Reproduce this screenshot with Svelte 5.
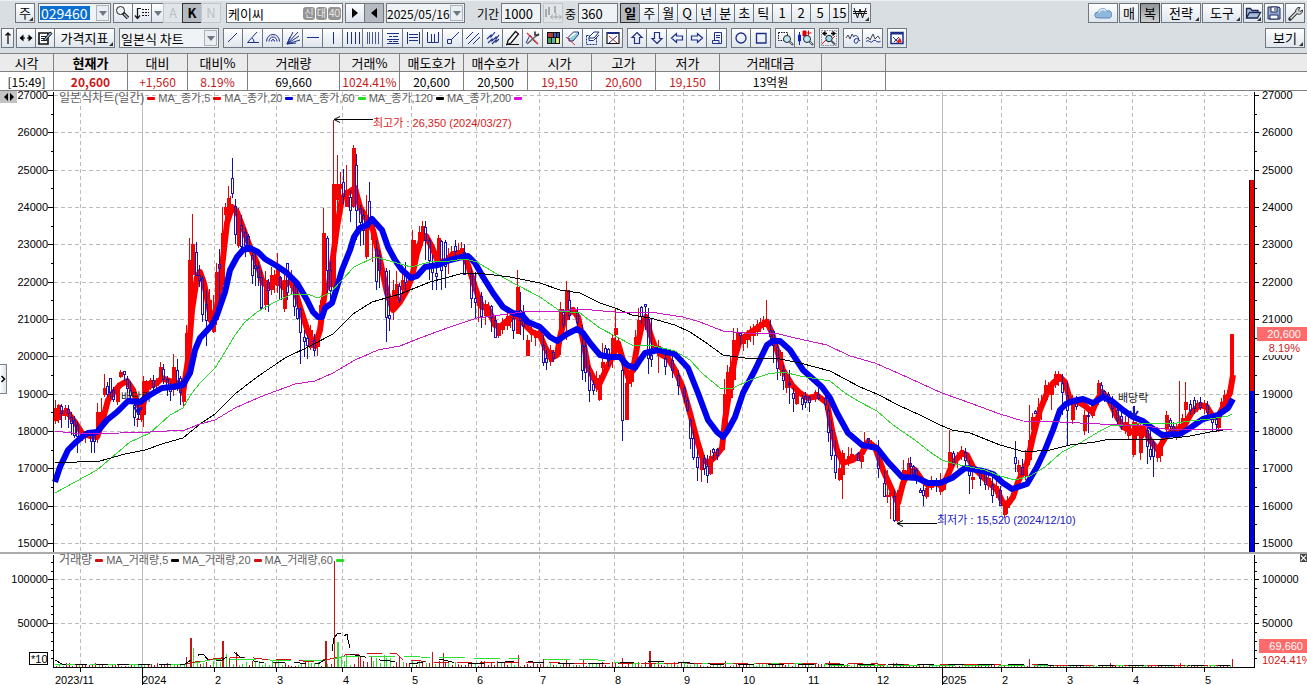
<script>
  // Icons are drawn on an 18 x 18 grid inside each toolbar button.
  const navy = '#1c2f86';
  const ln = (d, c = navy, w = 1) => `<path d="${d}" fill="none" stroke="${c}" stroke-width="${w}"/>`;
  const lens = '<circle cx="11" cy="10" r="3.5" fill="#bfe9ee" stroke="#223" /><path d="M13.5 12.5L17 16" stroke="#55606a" stroke-width="2.4"/><path d="M14 13L16 15" stroke="#b9c3c9"/>';
  const icons = {
    search: '<circle cx="6.5" cy="6.500" r="4" fill="#eef4f8" stroke="#222"/><path d="M9 9L14 14" stroke="#222" stroke-width="3.6"/><path d="M10 10L14 14" stroke="#aab4ba" stroke-width="1.6"/>',
    sort: ln('M4.500 14V4.500H8M2 11.500L4.500 14.500L7 11.500', '#111', 1.2) + '<path d="M9 5.500h7M9 8.500h7M9 11.500h7" stroke="#111" stroke-dasharray="2 1"/>',
    spread: '<path d="M2 5v8M5 3v8M11 2v7" stroke="#aaa" stroke-width="2"/><path d="M7 13h10M9 10.500L6.500 13L9 15.500M15 10.500L17.500 13L15 15.500M12 9v6" stroke="#a3a3a3" fill="none"/>',
    won: ln('M2 4L5.500 14L8 5L10.500 14L14 4M1 7.500h14M1 9.500h14', '#111'),
    cloud: '<path d="M4.500 14a3.500 3 0 0 1-.5-6a5 5 0 0 1 9-1a3.800 3.600 0 0 1 2 7z" fill="#8fb8dc" stroke="#5c88b4"/><path d="M5 8.500a4 4 0 0 1 7-1.500" stroke="#e4f1fb" fill="none" stroke-width="1.500"/>',
    folder: '<path d="M2.500 14V4.500h4l1.500 2h6V9M2.500 14l3-5.500h11l-3 5.500z" fill="#a9bddb" stroke="#1b2a55" stroke-width="1.300"/>',
    disk: '<path d="M3 3h11l1 1v11H3z" fill="#93a9d4" stroke="#1b2a55"/><path d="M6 3h6v5H6zM5 11h8v4H5z" fill="#fff" stroke="#1b2a55"/><path d="M10 4v3" stroke="#1b2a55"/>',
    wrench: '<path d="M4 15L11 8" stroke="#333" stroke-width="3.600" stroke-linecap="round"/><path d="M10 8.500a3.600 3.600 0 0 1 4-5l-1.500 2.500l1.500 1.500l2.500-1.500a3.600 3.600 0 0 1-5 4z" fill="#cfd4d8" stroke="#333"/><path d="M4.500 14.500L11 8" stroke="#d8dde0" stroke-width="1.600"/>',
    up: ln('M9 15V4M6.500 6.500L9 4L11.500 6.500', '#111', 1.3),
    leftright: '<path d="M2.500 9L6.500 5.500v7zM15.500 9L11.500 5.500v7z" fill="#000"/><path d="M5 9h8" stroke="#000" stroke-dasharray="3 2"/>',
    memo: '<path d="M3 4h9v11H3z" fill="#fff" stroke="#111" stroke-width="1.600"/><path d="M5 7.500h5M5 9.500h6M5 11.500h6" stroke="#223"/><path d="M7.500 11L14 3l2 1.500L9 12z" fill="#8fa9c9" stroke="#111"/>',
    line: ln('M4 13L13 4'),
    angle: ln('M13 3L3.500 13.500H15M8 9a5 5 0 0 1 2 4.500'),
    arcs: ln('M2.500 12.500a6.500 7 0 0 1 13 0M5 12.500a4 4.500 0 0 1 8 0M7.500 12.500a1.500 2 0 0 1 3 0'),
    fan: ln('M3 15L14 3M3 15L9 3M3 15L15 7M3 15L16 11M3 15L12 14M3 15L6 8'),
    h: ln('M3 8.500h12'),
    v: ln('M9.500 3v12'),
    v4: ln('M3.500 3v12M7.500 3v12M11.500 3v12M15.500 3v12'),
    v5: ln('M3.500 3v12M5.500 3v12M8.500 3v12M11.500 3v12M14.500 3v12', '#4a5a94'),
    rows: ln('M3 4.500h12M5 7.500h3M9 7.500h5M3 10.500h12M5 12.500h3M9 12.500h5M3 14.500h12'),
    rowsbox: ln('M3.500 3v12M15.500 3v12M5 5.500h9M5 8.500h9M5 11.500h9'),
    cycles: ln('M3.500 3v10.500h4V5M7.500 13.500h3V5M10.500 13.500h4V3'),
    node: ln('M7 11L15 3M3.500 10.500h4v4h-4z'),
    hatch: ln('M2 10L9 3M4 15L15 4M9 15L16 8'),
    hatch2: ln('M3 10l4-4v2l4-5M4 14l4-4v2l4-4v2l3-4M8 15l4-4v2l3-3', navy, 1.1),
    pencil: '<path d="M4 11.500L11.500 2.500l3 2.500L7 14l-4 1.500z" fill="#fff" stroke="#111" stroke-width="1.300"/><path d="M2 15.500h13" stroke="#111"/>',
    crosswrench: ln('M2 14l4-8 4 6 4 3', '#1c2f86') + ln('M3 4l11 11', '#d33', 1.2) + ln('M3 15L12 7', '#666', 1.6) + ln('M11 2.500v3.500h4M12 7l3-2', '#333', 1.6),
    palette: '<path d="M3 3h13v12H3z" fill="#111"/><path d="M4 4h5v4H4z" fill="#b43a3a"/><path d="M10 4h2v4h-2z" fill="#3b62bd"/><path d="M13 4h2v4h-2z" fill="#3c4fae"/><path d="M4 9h3v5H4z" fill="#48a05a"/><path d="M8 9h3v5H8z" fill="#52b8b0"/><path d="M12 9h3v5h-3z" fill="#e9e368"/>',
    eraser: '<path d="M4 8.500L9.500 3h5L9 9.500H4z" fill="#fff" stroke="#1c2f86"/><path d="M5 9.500v2.500h4l5.500-6.500V3" fill="#8fd0d6" stroke="#1c2f86"/><path d="M2 8l9 8" stroke="#d33"/>',
    eraserbox: '<path d="M2.500 6.500h10v9h-10z" fill="none" stroke="#1c2f86" stroke-dasharray="2 1"/><path d="M5 8L10 3h5L10 9H5zM5 9v2.500h4.500L15 6" fill="#fff" stroke="#1c2f86"/>',
    closebox: '<path d="M3 3.500h12v11H3z" fill="#fff" stroke="#111" stroke-width="1.200"/><path d="M3 4h12" stroke="#1c2f86" stroke-width="2"/><path d="M5 7l8 7" stroke="#d22"/><path d="M13 7l-8 7" stroke="#1c2f86"/>',
    aup: ln('M9 3.500L14 8.500H11.500V14.500H6.500V8.500H4z', navy, 1.2),
    adown: ln('M9 14.500L14 9.500H11.500V3.500H6.500V9.500H4z', navy, 1.2),
    aleft: ln('M3.500 9L8.500 4.500V7H14.500V11H8.500V13.500z', navy, 1.2),
    aright: ln('M14.500 9L9.500 4.500V7H3.500V11H9.500V13.500z', navy, 1.2),
    scroll: ln('M6.500 3.500h7v11h-9v-3h3.500M6.500 3.500v8M11 14.500v-3H5M8 6.500h4M8 8.500h4'),
    circle: ln('M14 9a5 5 0 1 1-10 0a5 5 0 1 1 10 0', navy, 1.3),
    square: ln('M4.500 4.500h9.500v9.500H4.500z', navy, 1.3),
    zoombox: '<path d="M2.500 3.500h9v8h-9z" fill="none" stroke="#111" stroke-dasharray="1.500 1"/>' + lens,
    zoomcandle: '<path d="M3.500 3v13M2.500 6h2v6h-2z" stroke="#1020c8" fill="#1020c8"/><path d="M7 2h3v5H7zM12.500 1.500v5M10.500 4h5" stroke="#d00" fill="#d00"/>' + lens,
    zoomrange: '<path d="M1.500 1.500h15v15h-15z" fill="none" stroke="#888" stroke-dasharray="1.500 1"/><path d="M3 4.500h4M11 4.500h4M5.500 2.500L3 4.500l2.500 2M12.500 2.500L15 4.500l-2.500 2" stroke="#000" fill="none" stroke-width="1.300"/><path d="M2 15l4-4 3 2 6-6" stroke="#d22" fill="none"/><circle cx="9" cy="9.500" r="3.200" fill="#9adfe4" stroke="#223"/><path d="M11.500 12L15 15.500" stroke="#556" stroke-width="2"/>',
    wave: ln('M2 9l2-3 2 4 2-5 2 3', '#445') + ln('M9 8c3-4 8 1 4 6c-2 1-4-1-2-4c2-1 4 0 5 2'),
    wave2: ln('M2 10l2-2 2 3 3-6 2 5 3-3 2 3', '#445') + ln('M2 12.500q2-2 3.500 0q2 2 4-1q2-1 3 1q2 1 4 0'),
    report: '<path d="M3 3.500h12v11H3z" fill="#fff" stroke="#1c2f86" stroke-width="1.500"/><path d="M3 4.500h12" stroke="#1c2f86" stroke-width="2"/><path d="M5 8l6 6M6 13l5-5" stroke="#1c2f86"/><path d="M8 13.500l4-5 2 5z" fill="#d22"/>'
  };

  const drawTools = [
    ['line', '추세선'], ['angle', '각도선'], ['arcs', '피보나치 아크'], ['fan', '피보나치 팬'], ['h', '수평선'],
    ['v', '수직선'], ['v4', '등간격선'], ['v5', '시간대'], ['rows', '되돌림'], ['rowsbox', '분할선'],
    ['cycles', '사이클'], ['node', '선분'], ['hatch', '평행선'], ['hatch2', '채널'], ['pencil', '연필'],
    ['crosswrench', '설정'], ['palette', '색상'], ['eraser', '지우개'], ['eraserbox', '영역 지우기'], ['closebox', '모두 지우기']
  ];
  const toolGroups = [
    drawTools,
    [['aup', '위'], ['adown', '아래'], ['aleft', '왼쪽'], ['aright', '오른쪽'], ['scroll', '메모']],
    [['circle', '원'], ['square', '사각형']],
    [['zoombox', '영역 확대'], ['zoomcandle', '봉 확대']],
    [['zoomrange', '구간 확대']],
    [['wave', '파동'], ['wave2', '패턴']],
    [['report', '보고서']]
  ];
  const periods = ['일', '주', '월', 'Q', '년', '분', '초', '틱', '1', '2', '5', '15'];
  let period = $state('일');

  const quote = [
    ['시각', '[15:49]', 54, ''], ['현재가', '20,600', 74, 'red bold'], ['대비', '+1,560', 60, 'red'],
    ['대비%', '8.19%', 60, 'red'], ['거래량', '69,660', 92, ''], ['거래%', '1024.41%', 60, 'red'],
    ['매도호가', '20,600', 64, ''], ['매수호가', '20,500', 64, ''], ['시가', '19,150', 64, 'red'],
    ['고가', '20,600', 64, 'red'], ['저가', '19,150', 64, 'red'], ['거래대금', '13억원', 102, ''], ['', '', 64, '']
  ];

  const priceLegend = [['MA_종가,5', '#f00000'], ['MA_종가,20', '#f00000'], ['MA_종가,60', '#0000e0'], ['MA_종가,120', '#20e020'], ['MA_종가,200', '#000']];
  const lastLegend = '#e000e0';
  const volumeLegend = [['MA_거래량,5', '#d01010'], ['MA_거래량,20', '#000'], ['MA_거래량,60', '#d01010']];

  const prices = [27000, 26000, 25000, 24000, 23000, 22000, 21000, 20000, 19000, 18000, 17000, 16000, 15000];
  const py = (p) => Math.round(95 + ((27000 - p) * 448) / 12000);
  const months = [
    [80, '2023/11', 55], [142, '2024', 142, 1], [214, '2', 215], [276, '3', 277], [342, '4', 343], [411, '5', 412],
    [476, '6', 477], [539, '7', 540], [614, '8', 615], [683, '9', 684], [742, '10', 743], [807, '11', 808],
    [876, '12', 877], [942, '2025', 942, 1], [1001, '2', 1002], [1066, '3', 1067], [1132, '4', 1133], [1204, '5', 1205]
  ];
  const minorVolume = [562, 571, 588, 597, 606, 614, 632, 641, 650, 658];

  const ma5 = '55,420 60,413 68,413 75,422 82,433 90,436 97,437 102,423 108,400 113,393 120,385 127,381 133,390 138,405 142,410 147,387 157,383 162,378 167,380 173,382 180,384 183,393 188,360 192,310 197,277 200,272 204,283 208,303 212,323 217,307 222,267 227,223 232,207 237,212 242,225 250,247 257,263 263,283 270,287 277,277 283,287 292,280 300,307 308,332 315,346 320,330 325,290 329,284 333,257 337,227 342,198 348,193 355,188 360,207 367,220 373,230 380,260 387,293 393,310 400,302 407,290 412,277 417,253 422,237 426,236 432,247 438,262 447,261 453,254 462,253 468,265 475,287 482,307 488,308 495,325 500,327 508,320 515,315 523,323 532,332 540,335 545,347 551,358 557,355 560,337 565,317 573,310 578,317 583,340 588,367 598,387 605,372 613,355 618,343 623,360 628,377 633,370 637,347 642,325 646,317 650,333 655,347 662,355 668,358 675,370 683,388 690,413 697,440 703,460 708,463 715,457 722,448 725,420 730,387 735,357 740,340 747,335 757,328 767,322 772,333 777,350 783,370 792,385 800,393 808,398 818,396 827,403 832,430 837,450 843,463 853,460 862,453 868,442 875,447 883,470 892,490 898,503 903,483 908,473 915,470 922,480 928,485 937,483 942,487 947,477 953,463 962,453 967,455 973,467 983,477 997,490 1003,503 1008,504 1013,497 1018,482 1027,463 1033,437 1040,410 1047,393 1053,383 1060,377 1065,382 1070,400 1078,402 1085,406 1092,412 1097,400 1102,392 1108,398 1117,417 1123,427 1132,432 1143,428 1150,440 1158,450 1165,438 1173,430 1183,428 1192,412 1200,405 1207,407 1213,417 1218,417 1225,403 1230,393 1233,375';
  const ma20 = '55,482 60,467 68,450 75,443 82,437 88,433 97,432 107,420 117,412 128,401 140,402 150,395 162,388 172,387 183,385 190,373 195,350 200,338 212,325 217,315 225,292 230,270 237,257 243,250 250,248 258,252 265,259 277,266 287,273 297,283 307,300 313,312 318,317 322,317 325,308 332,303 337,287 342,270 350,250 354,237 360,228 367,225 372,219 382,230 388,247 395,260 402,270 411,278 417,276 425,267 438,265 450,260 462,257 468,256 475,263 483,277 493,293 503,307 513,313 522,315 528,322 540,327 550,337 557,341 567,334 577,329 583,333 590,343 600,355 610,357 620,357 627,365 635,368 640,360 645,353 658,350 675,354 688,368 698,393 708,420 717,432 723,437 728,430 735,417 743,393 755,370 767,345 773,341 780,341 790,350 803,370 822,387 830,398 837,413 848,433 862,445 877,448 888,462 902,477 917,478 928,483 940,483 952,478 965,468 983,471 993,474 1003,483 1012,489 1027,484 1037,467 1045,450 1053,430 1060,410 1066,404 1073,401 1083,399 1093,403 1103,397 1112,401 1123,410 1133,417 1143,421 1152,428 1162,435 1180,434 1190,428 1203,419 1218,415 1228,408 1233,399';
  const ma60 = '55,493 75,482 97,470 110,459 130,442 150,433 170,415 183,408 192,393 200,383 215,368 225,352 235,335 245,322 257,312 275,302 292,294 310,295 318,298 330,293 342,280 354,267 375,257 390,261 411,267 430,262 450,261 465,259 477,262 490,270 515,284 540,297 560,311 580,313 600,328 615,336 632,345 650,345 675,351 690,360 703,374 720,388 733,388 750,380 768,374 783,372 800,376 830,381 845,393 858,401 877,411 893,425 915,440 930,452 942,460 955,464 985,470 1000,476 1015,480 1030,476 1045,467 1062,452 1080,443 1100,431 1112,425 1130,425 1145,423 1170,424 1190,421 1210,419 1228,416 1232,414';
  const ma120 = '55,463 100,461 125,454 145,450 165,443 183,438 200,424 215,414 235,394 257,377 285,358 310,346 333,334 353,314 372,302 400,294 430,282 460,274 477,273 510,277 540,283 560,290 580,293 600,303 615,308 632,315 650,318 675,325 690,332 705,342 723,355 745,358 775,358 800,363 830,371 860,387 877,394 900,406 920,415 940,425 952,430 970,433 1000,445 1025,452 1050,450 1070,445 1095,442 1110,439 1130,439 1165,439 1190,436 1210,432 1230,429';
  const ma200 = '55,431 80,434 120,433 150,432 185,430 200,424 215,420 235,408 260,397 295,384 315,381 333,373 355,360 378,350 400,346 420,338 450,327 477,318 500,315 530,311 560,311 580,309 615,312 650,312 683,317 700,322 723,331 745,333 775,333 795,338 827,345 850,356 875,363 900,374 942,393 970,403 1000,414 1023,421 1060,422 1100,424 1145,426 1165,429 1232,429';

  // Each candle: direction, x, high, low, body top, body bottom.
  const candles = `R 55 400 424 408 421;R 58 404 423 405 420;B 61 404 428 406 413;R 65 405 420 408 416;B 68 405 428 409 413;B 71 412 435 417 423;B 74 416 438 420 435;B 77 422 453 425 436;R 82 430 441 431 437;R 85 432 443 433 437;B 91 431 453 435 441;B 94 431 453 435 441;R 97 403 443 412 438;R 101 398 425 412 424;R 104 374 397 388 395;B 107 382 397 386 394;B 110 378 399 378 392;B 113 387 402 390 399;R 117 383 405 390 402;R 120 370 378 372 377;B 124 371 381 371 374;B 127 376 393 379 388;B 130 381 400 390 395;B 134 400 426 405 417;B 138 404 420 408 414;R 137 418 427 419 420;R 141 404 422 407 420;R 143 376 427 381 415;R 146 380 392 381 388;R 150 378 390 380 387;B 153 375 390 380 387;R 156 378 388 380 386;R 160 362 383 367 380;B 163 364 384 369 379;B 167 376 396 379 386;B 170 383 401 387 391;R 173 354 396 367 390;B 177 359 391 370 385;B 180 376 405 378 392;R 183 375 408 380 402;R 186 325 385 333 380;R 189 238 350 260 345;R 192 214 295 244 275;B 196 242 276 252 275;B 199 265 287 275 280;B 202 276 322 278 314;B 206 290 346 304 320;R 209 289 325 300 322;R 213 295 333 312 332;R 216 263 325 272 320;B 219 249 300 264 268;R 222 207 290 233 285;R 225 203 260 207 215;R 228 186 225 198 215;R 230 196 220 204 214;B 232 158 198 178 193;B 235 199 244 206 234;R 238 208 248 215 246;B 241 215 250 225 246;B 245 228 257 232 245;B 248 234 252 236 248;B 252 250 284 255 275;B 255 252 286 265 268;B 258 262 286 267 277;B 261 270 307 277 308;R 265 271 310 280 305;B 268 279 312 282 290;R 271 267 295 275 290;R 274 270 293 275 285;R 277 253 293 268 286;B 280 276 300 277 299;R 284 275 312 280 309;B 287 263 300 263 292;R 291 270 295 276 288;B 294 280 316 285 306;B 297 290 320 308 318;B 300 307 364 309 332;B 304 330 357 337 341;B 307 335 359 338 345;R 310 325 350 330 348;B 314 334 356 340 350;R 317 330 356 335 347;R 320 300 335 305 330;R 323 208 320 233 300;B 327 236 295 238 270;B 330 261 308 270 290;R 333 120 292 184 287;R 337 155 230 184 200;R 340 172 205 184 189;B 343 169 204 182 196;R 346 165 207 190 207;B 350 190 222 197 210;R 353 145 208 148 207;B 356 154 240 165 210;B 360 205 246 208 222;B 363 210 245 215 230;R 366 195 259 215 257;B 369 182 228 201 217;R 372 220 262 225 240;B 376 240 290 249 281;B 379 250 288 255 270;B 386 268 342 271 317;B 389 270 331 315 318;R 393 280 320 290 305;R 396 271 305 284 300;B 399 283 303 286 300;R 402 272 300 280 290;B 405 262 290 272 282;R 412 230 275 240 275;R 415 240 268 244 262;R 419 226 252 232 248;R 422 221 246 226 240;B 425 221 260 227 240;B 429 238 280 240 260;B 432 255 290 264 272;B 436 268 290 273 276;R 438 235 263 238 262;B 441 240 290 241 270;B 445 240 288 242 266;R 448 248 274 255 262;R 451 246 262 252 258;B 455 240 258 246 251;R 458 243 260 250 256;R 461 242 258 248 255;B 464 244 275 252 274;B 471 268 308 274 298;B 475 272 318 298 302;R 478 290 322 296 306;B 481 292 328 296 316;R 485 300 325 304 316;R 488 302 318 306 314;B 491 305 332 306 317;B 495 315 338 320 337;R 498 323 338 325 336;R 502 318 334 322 330;R 507 313 330 316 326;R 510 312 328 318 322;B 513 315 339 318 330;R 517 270 334 287 334;B 520 292 335 310 320;B 523 305 340 312 326;R 527 335 356 340 356;R 531 326 342 330 335;R 535 330 346 332 338;R 539 324 340 330 336;B 543 335 366 345 362;B 546 350 370 358 362;R 550 345 366 350 362;B 553 350 362 352 358;R 557 340 356 345 352;R 560 302 355 309 330;B 563 309 328 312 324;R 566 281 340 290 320;B 569 290 320 300 315;B 577 307 332 312 322;B 582 325 380 345 370;B 585 340 382 346 372;B 589 365 402 373 390;B 593 380 395 384 390;R 596 371 392 378 388;R 599 375 401 380 400;R 602 343 371 362 368;B 605 345 357 348 355;B 608 348 367 349 360;R 612 335 368 338 360;R 615 308 352 328 335;R 618 338 356 342 352;B 622 360 441 370 420;R 626 378 420 383 420;R 628 372 388 376 384;R 631 370 387 372 382;R 635 330 372 337 365;R 638 308 340 320 335;B 641 306 324 307 316;B 645 304 330 304 306;B 648 308 374 319 358;B 651 318 367 355 359;R 658 340 373 346 356;B 665 355 375 358 366;B 672 355 378 360 370;B 678 370 395 375 385;B 684 385 403 388 396;B 687 397 412 400 410;B 690 418 449 420 438;B 693 430 460 438 457;B 697 450 481 457 467;R 701 455 482 460 470;B 704 455 475 458 468;B 707 455 483 466 475;R 710 450 475 456 474;B 713 448 460 449 452;B 717 448 460 449 455;R 724 379 450 394 430;R 727 365 430 372 400;R 730 357 400 367 398;R 733 328 390 340 380;R 737 328 360 333 345;B 740 332 345 333 335;R 743 335 351 338 344;R 747 330 348 334 340;R 750 326 342 330 336;R 753 324 345 328 336;R 757 320 336 324 332;R 760 318 332 322 328;R 763 316 330 320 326;R 766 300 325 319 324;B 770 320 340 330 336;B 773 330 363 331 345;B 777 338 380 347 368;R 780 350 376 352 370;B 783 365 390 370 380;R 786 374 393 378 388;B 789 370 404 383 384;B 793 388 412 393 398;R 796 390 405 392 404;B 802 395 410 398 404;B 805 392 408 396 402;B 809 396 412 397 402;R 815 390 402 392 398;B 818 388 400 394 398;B 825 395 410 398 404;B 828 405 442 410 432;B 831 420 460 430 455;B 835 440 479 455 472;R 839 450 481 468 480;R 842 450 499 453 475;R 848 447 466 456 462;R 851 448 462 454 460;B 858 452 460 453 460;R 861 455 468 456 462;R 864 432 452 442 450;B 868 438 443 438 441;R 871 440 450 442 446;B 878 440 478 447 468;B 884 470 497 483 496;R 887 470 503 495 497;R 890 490 519 492 496;B 894 490 522 496 520;R 897 490 522 500 521;R 903 460 490 470 485;R 908 458 475 463 470;B 910 457 475 463 466;B 913 465 480 466 474;B 916 468 484 470 478;B 920 488 492 490 492;B 923 485 506 490 495;R 926 485 499 488 497;R 931 476 490 480 488;B 936 478 492 480 484;R 940 473 495 480 492;R 943 478 491 480 490;R 949 430 470 452 472;B 953 451 466 453 463;R 957 452 468 456 460;R 961 446 460 450 456;B 965 448 466 452 460;B 969 460 494 465 475;R 972 470 489 477 480;B 980 468 486 470 478;B 985 470 490 474 484;R 988 474 490 478 486;B 992 475 503 485 495;R 996 480 498 486 494;B 1000 486 506 490 505;R 1004 500 518 505 515;R 1007 496 514 500 508;B 1015 441 472 457 463;R 1018 460 475 465 472;B 1022 459 475 467 474;R 1025 450 480 464 476;R 1029 405 465 440 460;R 1032 413 440 417 430;B 1035 410 414 411 413;R 1038 398 413 407 412;R 1041 395 420 404 408;R 1045 380 400 385 400;R 1048 382 396 385 392;R 1051 383 410 385 395;R 1055 371 388 374 385;R 1058 371 386 374 382;B 1062 374 415 383 392;B 1067 382 446 395 410;R 1072 395 424 400 420;B 1076 396 410 400 406;R 1084 410 435 415 431;B 1088 412 433 415 416;R 1092 400 418 405 416;R 1098 380 405 383 395;B 1101 382 400 385 398;B 1104 390 402 391 396;B 1108 392 404 394 400;B 1112 396 418 400 408;B 1117 405 424 410 420;B 1121 412 430 416 426;R 1125 416 434 422 428;R 1128 415 440 424 436;R 1133 420 457 422 455;R 1136 422 440 424 436;R 1140 423 460 425 453;R 1143 424 438 426 434;B 1147 428 464 430 446;B 1150 430 460 449 456;B 1153 440 477 442 456;R 1157 446 462 448 458;R 1160 440 462 442 456;R 1166 411 435 415 430;B 1170 418 436 420 426;B 1173 422 438 426 432;R 1176 424 440 428 436;R 1179 381 432 424 430;R 1182 414 436 418 430;R 1185 382 425 402 410;B 1190 400 415 404 410;B 1194 397 414 400 408;R 1197 400 412 403 408;B 1200 397 410 402 407;R 1204 400 414 403 408;B 1207 401 420 405 412;B 1212 415 432 416 422;B 1216 418 431 419 424;R 1218 413 432 415 428;R 1221 398 418 402 412;R 1224 390 410 395 408;R 1227 390 408 394 402`
    .split(';').map((s) => { const [c, ...n] = s.split(' '); return [c, ...n.map(Number)]; });

  const bigBars = { 186: [10, 'r'], 190: [29, 'r'], 193: [19, 'g'], 222: [26, 'r'], 226: [13, 'g'], 229: [9, 'r'], 236: [15, 'r'], 325: [26, 'r'], 334: [106, 'r'], 337: [25, 'g'], 341: [11, 'g'], 346: [12, 'g'], 352: [9, 'r'], 358: [13, 'r'], 371: [10, 'r'], 384: [12, 'g'], 432: [15, 'r'], 443: [14, 'r'], 518: [12, 'r'], 543: [8, 'r'], 566: [8, 'r'], 583: [8, 'r'], 622: [9, 'r'], 649: [16, 'r'], 725: [6, 'r'], 829: [6, 'r'], 1029: [8, 'r'], 1110: [4, 'r'], 1180: [4, 'r'], 1232: [8, 'r'] };
  const bars = [];
  for (let i = 0; i < 361; i++) {
    const x = Math.round(56 + i * 3.27);
    const near = Object.keys(bigBars).map(Number).find((k) => Math.abs(k - x) <= 1);
    const wave = (i * 37 + ((i * i) % 23)) % 11;
    const top = x < 190 ? 3 : x < 300 ? 6 : x < 330 ? 6 : x < 400 ? 10 : x < 500 ? 6 : x < 700 ? 4 : x < 900 ? 3 : 1;
    if (near) bars.push([near, ...bigBars[near]]);
    else bars.push([x, 1 + Math.round((wave / 11) * top), wave % 2 ? 'g' : 'r']);
  }
  const vol = [
    ['55,664 190,664 210,660 240,659 270,660 330,660 345,656 420,657 520,659 590,659 620,663 700,663 790,663 830,665 1230,666', '#30e030', '26 9'],
    ['185,664 205,660 230,657 245,657 262,659 290,659 310,662 330,659 345,655 375,653 396,653 402,659 430,662 560,663 700,663 1230,666', '#d01010', '15 8'],
    ['55,660 62,664 185,664 200,654 204,655 210,662 222,660 234,652 240,657 258,662 300,663 318,664 328,658', '#000', '12 9'],
    ['332,651 334,638 338,633 341,633', '#000', 'none'],
    ['344,636 347,634 348,640 350,648', '#000', 'none'],
    ['350,654 380,660 400,662 412,664 440,659 460,664 490,663 520,661 560,664 620,663 650,661 690,663 730,665 830,664 1035,664 1060,666 1190,665 1230,666', '#000', '16 14']
  ];
</script>

{#snippet icon(name)}
  <svg class="icon" viewBox="0 0 18 18" aria-hidden="true">{@html icons[name]}</svg>
{/snippet}

<main>
  <header class="tools">
    <div class="bar">
      <button class="btn corner lead">주</button>
      <div class="combo code">
        <input aria-label="종목코드" value="029460" />
        <button class="drop" aria-label="종목 목록"></button>
      </div>
      <div class="group after">
        <button class="btn" aria-label="종목 검색">{@render icon('search')}</button>
        <button class="btn" aria-label="정렬">{@render icon('sort')}</button>
        <button class="btn slim" aria-label="정렬 목록"><i class="tri"></i></button>
        <button class="btn off">A</button>
        <button class="btn on">K</button>
        <button class="btn off">N</button>
      </div>
      <div class="combo name">
        <input aria-label="종목명" value="케이씨" />
        <span class="tag">신</span><span class="tag">대</span><span class="tag">40</span>
      </div>
      <div class="group">
        <button class="btn" aria-label="다음"><i class="play"></i></button>
        <button class="btn shade" aria-label="이전"><i class="play back"></i></button>
      </div>
      <div class="combo date">
        <input aria-label="기준일" value="2025/05/16" />
        <button class="drop" aria-label="달력"></button>
      </div>
      <label class="span"><span>기간</span><input class="num" value="1000" /></label>
      <button class="btn off" aria-label="간격 맞춤">{@render icon('spread')}</button>
      <label class="among"><span>중</span><input class="num" value="360" /></label>
      <div class="group">
        {#each periods as p}
          <button class="btn" class:on={p === period} onclick={() => (period = p)}>{p}</button>
        {/each}
      </div>
      <button class="btn corner" aria-label="원화">{@render icon('won')}</button>
      <div class="right">
        <button class="btn cloud" aria-label="클라우드">{@render icon('cloud')}</button>
        <button class="btn">매</button>
        <button class="btn pressed">복</button>
        <button class="btn wide corner">전략</button>
        <button class="btn wide corner">도구</button>
        <button class="btn corner" aria-label="열기">{@render icon('folder')}</button>
        <button class="btn" aria-label="저장">{@render icon('disk')}</button>
        <button class="btn" aria-label="환경설정">{@render icon('wrench')}</button>
      </div>
    </div>
    <div class="bar second">
      <button class="btn slim" aria-label="위로">{@render icon('up')}</button>
      <div class="group">
        <button class="btn" aria-label="좌우 이동">{@render icon('leftright')}</button>
        <button class="btn" aria-label="지표 편집">{@render icon('memo')}</button>
        <button class="btn corner indicator">가격지표</button>
      </div>
      <div class="combo kind">
        <select aria-label="차트 종류"><option>일본식 차트</option></select>
        <span class="drop" aria-hidden="true"></span>
      </div>
      {#each toolGroups as group}
        <div class="group">
          {#each group as [name, label]}
            <button class="btn tool" aria-label={label}>{@render icon(name)}</button>
          {/each}
        </div>
      {/each}
      <div class="right"><button class="btn wide corner">보기</button></div>
    </div>
  </header>

  <table>
    <colgroup>
      {#each quote as q}<col style="width: {q[2]}px" />{/each}
      <col />
    </colgroup>
    <thead><tr>{#each quote as q}<th class:bold={q[3].includes('bold')}>{q[0]}</th>{/each}<th></th></tr></thead>
    <tbody><tr>{#each quote as q}<td class={q[3]}>{q[1]}</td>{/each}<td></td></tr></tbody>
  </table>

  <section class="chart">
    <svg class="plot" viewBox="0 91 1307 594" role="img" aria-label="케이씨 일간 차트">
      <g class="grid">
        {#each prices as p}<path d="M54 {py(p) + 0.5}H1252" />{/each}
        <path d="M54 579.5H1252M54 623.5H1252" />
        {#each months as m}<path class:year={m[3]} d="M{m[0] + 0.5} 92V552M{m[0] + 0.5} 555V667" />{/each}
      </g>

      <g class="crisp">
        {#each candles as [c, x, h, l, t, b]}
          {#if c === 'R'}
            <path d="M{x + 0.5} {h}V{l}" stroke="#dc0808" />
            <rect x={x - 1} y={t} width="4" height={Math.max(1, b - t)} fill="#f00505" />
          {/if}
        {/each}
      </g>
      <polyline points={ma5} class="ma" stroke="#fa0000" stroke-width="6" />
      <g class="crisp">
        {#each candles as [c, x, h, l, t, b]}
          {#if c === 'B'}
            <path d="M{x + 0.5} {h}V{t}M{x + 0.5} {b}V{l}" stroke="#1212a8" />
            <rect x={x - 0.5} y={t + 0.5} width="2" height={Math.max(1, b - t)} fill="none" stroke="#1a12b8" />
          {/if}
        {/each}
        <rect x="1230" y="334" width="4" height="44" fill="#fa0000" />
      </g>
      <text class="note" x="121" y="401">배당락</text>
      <polyline points={ma20} class="ma" stroke="#0000f0" stroke-width="6" />
      <path d="M138 403V412M134 407L138 413L142 407" class="ma" stroke="#1212c8" stroke-width="2" />
      <polyline points={ma60} class="ma crisp" stroke="#30d830" />
      <polyline points={ma120} class="ma crisp" stroke="#000" />
      <polyline points={ma200} class="ma crisp" stroke="#c818c8" />
      <path d="M1134 406V416M1130 411L1134 417L1138 411" class="ma" stroke="#1212c8" stroke-width="2" />
      <text class="note" x="1118" y="402">배당락</text>

      <path d="M334 119.500H373M340 116.500L334 119.500L340 122.500M897 523.500H937M903 520.500L897 523.500L903 526.500" class="ma" stroke="#000" />
      <text x="373" y="127" fill="#d81818">최고가 : 26,350 (2024/03/27)</text>
      <text x="937" y="524" fill="#2020c0">최저가 : 15,520 (2024/12/10)</text>

      <g class="crisp">
        {#each bars as [x, h, c]}
          <rect {x} y={667 - h} width={(h > 20 && h < 50) || h === 16 ? 2 : 1} height={h} fill={c === 'r' ? '#c41414' : '#30e030'} />
        {/each}
      </g>
      {#each vol as [pts, color, dash]}
        <polyline points={pts} class="ma crisp" stroke={color} stroke-dasharray={dash} />
      {/each}

      <rect x="0" y="552" width="1307" height="2" fill="#acacac" />
      <g class="crisp">
        <rect x="1250" y="180" width="4" height="211" fill="#e80000" />
        <rect x="1250" y="391" width="4" height="161" fill="#0000e0" />
        <path d="M53.500 92V552M53.500 555V667M1254.500 92V552M1254.500 555V667M53 667.500H1255M1249.500 180V552" stroke="#000" />
        {#each prices as p, i}
          <path d="M48 {py(p) + 0.5}h5M1255 {py(p) + 0.5}h4" stroke="#000" />
          {#if i < 12}<path d="M51 {py(p - 500) + 0.5}h2M1255 {py(p - 500) + 0.5}h2" stroke="#000" />{/if}
        {/each}
        {#each [579, 623] as y}<path d="M48 {y + 0.5}h5M1255 {y + 0.5}h4" stroke="#000" />{/each}
        {#each minorVolume as y}<path d="M51 {y + 0.5}h2M1255 {y + 0.5}h2" stroke="#000" />{/each}
        {#each months as m}<path d="M{m[0] + 0.5} 667V{m[3] ? 685 : 672}" stroke="#000" />{/each}
      </g>
      {#each prices as p}
        <text x="48" y={py(p) + 4} text-anchor="end">{p}</text>
        <text x="1262" y={py(p) + 4}>{p}</text>
      {/each}
      {#each [[100000, 583], [50000, 627]] as [v, y]}
        <text x="48" {y} text-anchor="end">{v}</text>
        <text x="1262" {y}>{v}</text>
      {/each}
      {#each months as m}<text x={m[2]} y="684">{m[1]}</text>{/each}

      <rect x="1257" y="341" width="50" height="14" fill="#fff" />
      <rect x="1257" y="327" width="50" height="14" fill="#ff6a6a" />
      <text x="1301" y="338" text-anchor="end" fill="#fff">20,600</text>
      <text x="1300" y="352" text-anchor="end" fill="#d01818">8.19%</text>
      <rect x="1259" y="639" width="48" height="14" fill="#ff6a6a" />
      <text x="1303" y="650" text-anchor="end" fill="#fff">69,660</text>
      <text x="1262" y="664" fill="#d01818">1024.41%</text>
      <rect x="29.500" y="652.500" width="18" height="12" fill="#fff" stroke="#000" />
      <text x="31" y="663">*10</text>
    </svg>

    <div class="legend">
      <span class="title">일본식차트(일간)</span>
      {#each priceLegend as [name, color]}<i style="background: {color}"></i><span>{name}</span>{/each}
      <i style="background: {lastLegend}"></i>
    </div>
    <div class="legend lower">
      <span class="title">거래량</span>
      {#each volumeLegend as [name, color]}<i style="background: {color}"></i><span>{name}</span>{/each}
      <i style="background: #20e020"></i>
    </div>
    <button class="mover" aria-label="영역 너비 조절"><i class="play back"></i><i class="play"></i></button>
    <button class="handle" aria-label="패널 열기"><svg viewBox="0 0 6 8" aria-hidden="true"><path d="M1.500 1L4.500 4L1.500 7" fill="none" stroke="#000" stroke-width="1.500" /></svg></button>
    <button class="close" aria-label="거래량 닫기"><svg viewBox="0 0 8 8" aria-hidden="true"><path d="M1 1L7 7M7 1L1 7" stroke="#fff" stroke-width="1.500" /></svg></button>
  </section>
</main>

<style>
  :global(body) { background: #fff; overflow-x: hidden; }
  main { font-family: "Liberation Sans", "Noto Sans CJK KR", sans-serif; font-size: 12px; color: #000; min-width: 1240px; }
  button, input, select { font-family: "Noto Sans CJK KR", sans-serif; font-size: 13px; color: #000; margin: 0; box-sizing: border-box; border-radius: 0; }

  .tools { background: #d9dee3; border-top: 1px solid #eef1f3; padding: 2px 2px 5px 1px; }
  .bar { display: flex; align-items: center; gap: 2px; height: 20px; }
  .second { margin-top: 5px; gap: 4px; }
  .second > .slim { margin-right: -2px; }
  .group, .right { display: flex; }
  .right { margin-left: auto; gap: 1px; }
  .lead { margin-left: 14px; }
  .after { margin-right: 3px; }

  .btn { position: relative; width: 20px; height: 20px; padding: 0; line-height: 18px; display: flex; justify-content: center; align-items: center; border: 1px solid #6f7881; background: linear-gradient(#fdfeff, #dfe6ed); flex: none; }
  .group .btn + .btn { margin-left: -1px; }
  .group .tool + .tool { margin-left: 0; border-left-width: 0; }
  .slim, .group .slim { width: 13px; }
  .wide { width: 40px; }
  .cloud { width: 30px; }
  .indicator { width: 61px; }
  .on { background: #b5bac0; border-color: #333; font-weight: 700; }
  .shade { background: #b5bac0; }
  .pressed { background: linear-gradient(#8f9498, #ced1d4); border-color: #333; }
  .off { color: #bcc2c7; border-color: #c0c6cc; background: #e0e5e9; }
  .corner::after { content: ""; position: absolute; right: 1px; bottom: 1px; border: 2px solid transparent; border-right-color: #333; border-bottom-color: #333; }
  .icon { width: 18px; height: 18px; display: block; flex: none; }
  .tri, .drop::after { content: ""; border: 4px solid transparent; border-top: 5px solid #6d7882; border-bottom: 0; }
  .play { border: 5px solid transparent; border-left: 6px solid #000; border-right: 0; }
  .back { transform: scaleX(-1); }

  .combo { display: flex; align-items: center; height: 20px; box-sizing: border-box; border: 1px solid #6f7881; background: #f0f3f5; flex: none; }
  .combo input, .combo select { flex: 1; min-width: 0; height: 18px; border: 0; background: transparent; padding: 0 1px; outline: 0; appearance: none; }
  .drop { width: 13px; height: 16px; margin-right: 1px; padding: 0; border: 1px solid #aab2ba; background: #e9eef2; display: flex; justify-content: center; align-items: center; flex: none; box-sizing: border-box; }
  .code { width: 73px; margin-left: 1px; }
  .code input { flex: none; width: 50px; height: 14px; margin: 0 auto 0 1px; background: #0a6fd0; color: #fff; font-size: 14px; }
  .name { width: 117px; background: #fff; }
  .tag { background: #949494; color: #e8e8e8; font-size: 10px; line-height: 13px; padding: 0 1px; border-radius: 3px; margin-right: 1px; }
  .date { width: 79px; }
  .date input { font-size: 12px; padding: 0; }
  .kind { width: 100px; }
  .span { display: flex; align-items: center; gap: 2px; margin-left: 10px; font-size: 12px; }
  .among { display: flex; align-items: center; gap: 2px; font-size: 12px; }
  .num { width: 40px; height: 20px; border: 1px solid #6f7881; background: #f0f3f5; padding: 0 2px; }

  table { width: 100%; table-layout: fixed; border-collapse: separate; border-spacing: 0; border-top: 1px solid #808080; font-family: "Noto Sans CJK KR", sans-serif; }
  th, td { height: 18px; line-height: 17px; box-sizing: border-box; padding: 0; text-align: center; font-weight: 400; border: 0 solid #808080; border-right-width: 1px; border-bottom-width: 1px; }
  th:last-child, td:last-child { border-right-width: 0; }
  th { background: #ebebeb; font-size: 13px; }
  td { height: 19px; font-size: 12px; }
  .red { color: #c81818; }
  .bold { font-weight: 700; }

  .chart { position: relative; }
  .plot { display: block; width: 100%; height: auto; font-size: 11px; }
  .grid path { fill: none; stroke: #bcbcbc; stroke-dasharray: 4 3; shape-rendering: crispEdges; }
  .grid .year { stroke-dasharray: none; }
  .ma { fill: none; stroke-linejoin: round; }
  .crisp { shape-rendering: crispEdges; }
  .note { fill: #222; }

  .legend { position: absolute; left: 59px; top: 1px; display: flex; align-items: center; gap: 3px; font-size: 11px; line-height: 13px; color: #606060; white-space: nowrap; }
  .legend .title { font-size: 12px; }
  .legend i { width: 8px; height: 3px; border-radius: 1px; }
  .lower { top: 78%; }
  .mover { position: absolute; left: 0; top: 0; width: 17px; height: 12px; padding: 0; border: 0; background: #c3c3c3; display: flex; justify-content: center; align-items: center; gap: 2px; }
  .mover .play { border-width: 4px; border-right-width: 0; border-left-width: 4px; }
  .handle { position: absolute; left: 0; top: 46%; width: 7px; height: 30px; padding: 0; border: 1px solid #78828c; border-left: 0; background: linear-gradient(90deg, #fff, #dde3e8); display: flex; align-items: center; }
  .handle svg { width: 6px; height: 8px; }
  .close { position: absolute; right: 0; top: 78%; width: 7px; height: 8px; padding: 0; border: 0; background: #444; }
  .close svg { display: block; width: 7px; height: 8px; }
</style>
